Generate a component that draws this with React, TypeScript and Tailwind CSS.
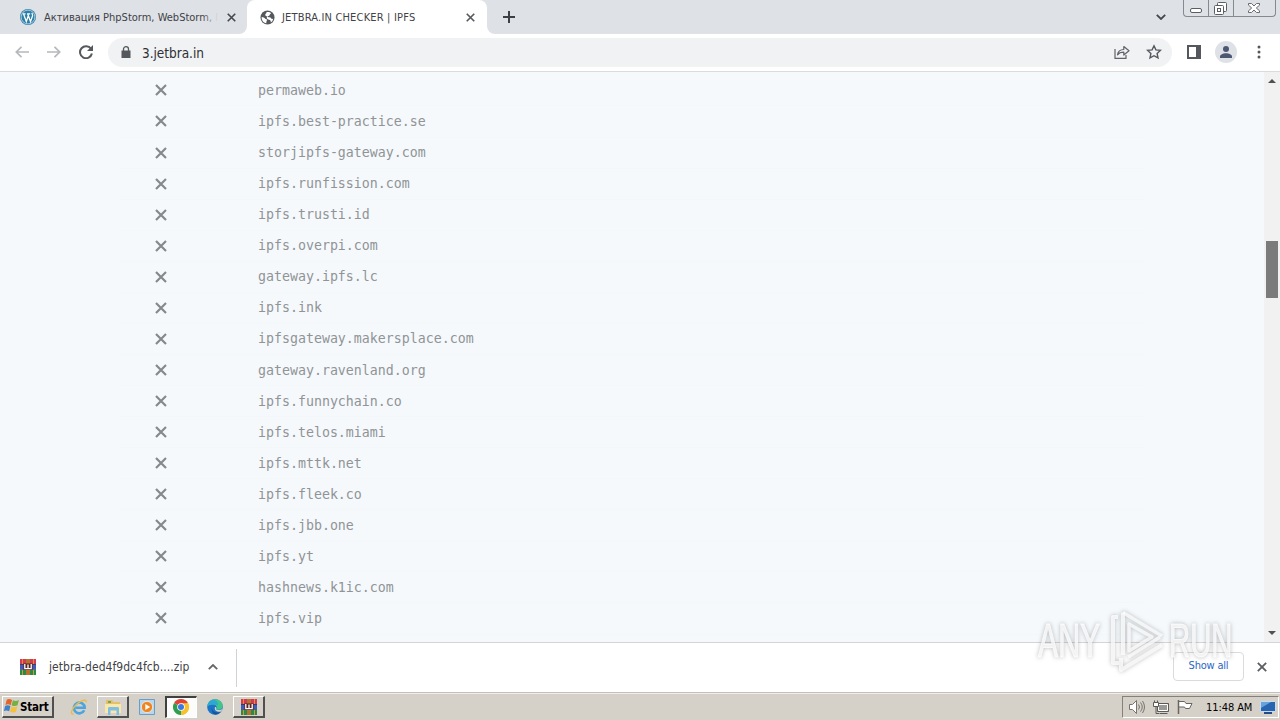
import type { ReactNode } from "react";

const gateways = [
  "permaweb.io",
  "ipfs.best-practice.se",
  "storjipfs-gateway.com",
  "ipfs.runfission.com",
  "ipfs.trusti.id",
  "ipfs.overpi.com",
  "gateway.ipfs.lc",
  "ipfs.ink",
  "ipfsgateway.makersplace.com",
  "gateway.ravenland.org",
  "ipfs.funnychain.co",
  "ipfs.telos.miami",
  "ipfs.mttk.net",
  "ipfs.fleek.co",
  "ipfs.jbb.one",
  "ipfs.yt",
  "hashnews.k1ic.com",
  "ipfs.vip",
];

function Cross({ className }: { className: string }) {
  return (
    <svg viewBox="0 0 12 12" className={className} fill="none" stroke="currentColor" strokeWidth="2.2">
      <path d="M1 1l10 10M11 1L1 11" />
    </svg>
  );
}

function WordPressIcon() {
  return (
    <svg viewBox="0 0 16 16" className="h-4 w-4 shrink-0">
      <circle cx="8" cy="8" r="8" fill="#2b7fa8" />
      <circle cx="8" cy="8" r="6.9" fill="none" stroke="#dcebf3" strokeWidth="0.7" />
      <path d="M2.6 4.8h3M7 4.8h3.2M3.6 5l2.7 7.6L8.2 7M7.8 5l2.7 7.6 2-5.6c.4-1.4-.6-2-.4-3" fill="none" stroke="#fff" strokeWidth="1.3" />
    </svg>
  );
}

function GlobeIcon() {
  return (
    <svg viewBox="0 0 16 16" className="h-[15px] w-[15px] shrink-0">
      <circle cx="8" cy="8" r="7.5" fill="#54585c" />
      <path d="M1.8 7.4c1.8.4 3 .6 3.6 1.6.4.8 1.8.5 2 1.3.2 1-.8 1.4-.7 3.8C3.6 13.5 1.5 10.8 1.8 7.4z" fill="#fff" />
      <path d="M7 2.2c1.6-.5 3.7 0 4.9 1.1-.4 1.1-1.5 1.1-1.7 2.2-.3 1-2.2.3-2.2 1.5.1 1 2 .5 3.1.9.9.4.8 1.6 1.9 1.7l1-.3c-.3 1.9-1.2 3-2.4 3.9-.3-1.2-.1-2-1-2.5-1.1-.5-2.9-.5-3.3-1.9-.2-1 .5-1.3-.1-2.2-.4-.8-1.7-.3-1.7-1.4C5.5 4.1 7.2 3.8 7 2.2z" fill="#fff" />
    </svg>
  );
}

function WinRarIcon({ className }: { className: string }) {
  return (
    <svg viewBox="0 0 16 16" className={className}>
      <path fill="#d03a52" d="M0 0h16v5H0z" />
      <path fill="#3c5cc0" d="M0 5.5h16v5H0z" />
      <path fill="#2c8a45" d="M0 11h16v5H0z" />
      <path fill="#2a1d26" d="M0 5h16v.7H0zM0 10.4h16v.7H0z" />
      <path fill="#b6722e" d="M6 0h4v16H6z" />
      <path fill="#592520" d="M3.5 4.5h9V11h-9z" />
      <path fill="none" stroke="#fff" strokeWidth="1.3" d="M4.8 5v4.6h6.4V5M8 5.5v4" />
      <path fill="#e9a33c" d="M2 0h.8v5H2zM13.2 0h.8v5h-.8zM2 11h.8v5H2zM13.2 11h.8v5h-.8z" />
    </svg>
  );
}

function StartFlag() {
  return (
    <svg viewBox="0 0 16 16" className="-mt-[2px] h-[18px] w-[17px] shrink-0">
      <path fill="#e4642b" d="M3.5 2c2-1 3.500-.6 5 .3L7.300 7.200C5.500 6.200 4 6.200 2.300 7z" />
      <path fill="#76b043" d="M9.300 2.600c2 .9 3.800.8 5.700-.2l-1.300 5c-1.900.9-3.700.9-5.600-.2z" />
      <path fill="#3c83c9" d="M2 7.900c1.800-.9 3.300-.8 5 .2L5.800 13c-1.700-1-3.300-1-5-.3z" />
      <path fill="#f5c13c" d="M7.900 8.400c1.900 1 3.700 1 5.600.1l-1.300 4.900c-1.900.9-3.700.9-5.600-.1z" />
    </svg>
  );
}

function IeIcon() {
  return (
    <svg viewBox="0 0 18 18" className="h-[18px] w-[18px]" fill="none">
      <path d="M14.200 12.200A5.400 5.400 0 1 1 14.700 9.800H5.500" stroke="#4aa5e0" strokeWidth="2.600" />
      <path d="M3.500 15.800C-.5 17 1.500 10.500 7.500 5.500c4-3.400 9.500-5 8.500-1.300" stroke="#e9bd4c" strokeWidth="1.500" />
    </svg>
  );
}

function FolderIcon() {
  return (
    <svg viewBox="0 0 18 16" className="h-4 w-[18px]">
      <path fill="#e3c069" d="M2 1h6l1.500 2H16v11H2z" />
      <path fill="#f9e9a8" d="M1 5h16v9H1z" />
      <path fill="#81bde4" d="M4 9.500c0-1 .5-1.500 1.500-1.500h8c1 0 1.500.5 1.500 1.500V16h-2.500v-4.500h-6V16H4z" />
      <path fill="#70a65b" d="M4 2h3v2H4z" />
    </svg>
  );
}

function MediaIcon() {
  return (
    <svg viewBox="0 0 16 16" className="h-4 w-4">
      <path fill="#b7d7ef" stroke="#6a9ec5" d="M.5.5h15v15H.5z" />
      <circle cx="8" cy="8" r="5.600" fill="#ef8422" stroke="#fff" strokeWidth=".6" />
      <path fill="#fff" d="M6.300 4.900v6.200L11.200 8z" />
    </svg>
  );
}

function ChromeIcon() {
  return (
    <svg viewBox="0 0 16 16" className="-mt-px -ml-px h-4 w-4">
      <path fill="#e14337" d="M8 8L1.070 4A8 8 0 0 1 14.930 4z" />
      <path fill="#f6c22d" d="M8 8L14.930 4A8 8 0 0 1 8 16z" />
      <path fill="#2f9e50" d="M8 8v8A8 8 0 0 1 1.070 4z" />
      <path fill="#f6c22d" d="M8 4.300h7.100A8 8 0 0 1 8 16l3.200-6.100z" />
      <circle cx="8" cy="8" r="3.800" fill="#fff" />
      <circle cx="8" cy="8" r="3" fill="#3b79e0" />
    </svg>
  );
}

function EdgeIcon() {
  return (
    <svg viewBox="0 0 16 16" className="h-4 w-4">
      <circle cx="8" cy="8" r="7.800" fill="#1b74c5" />
      <path fill="#42c58c" d="M.4 7.200C1 2.800 4.100.2 8 .2c4.600 0 7.800 3.200 7.800 6.500 0 2.800-2 4-4.200 4-1.700 0-2.600-.5-2.300-1 1.200-2.300-.5-4.100-3.400-4.100-2.500 0-4.400.7-5.500 1.600z" />
      <path fill="#2ea7d4" d="M.4 7.200C1 2.800 4 .8 7 1c3 .3 4.300 3 3.900 5.500C9.500 5.300 3.500 4.500.4 7.200z" />
      <path fill="#d5d0c8" d="M9.300 9.700c-.3.600.7 1.400 2.400 1.400 1.500 0 2.900-.5 3.900-1.300-.3 1-.9 2-1.600 2.800-3.500.8-7.200-.8-6-4.600.4-.2 1.700.5 1.300 1.700z" />
      <path fill="#15539e" d="M4.800 8.500c.3 4.500 4.200 6 8.600 4.500-2.700 3.700-9.300 3.700-8.600-4.500z" />
    </svg>
  );
}

// Classic raised / pressed taskbar button
function TaskButton({ pressed, children }: { pressed?: boolean; children: ReactNode }) {
  return (
    <div
      className={
        pressed
          ? "flex h-[22px] w-8 items-center justify-center border-t-2 border-l-2 border-r border-b border-t-[#404040] border-l-[#404040] border-r-white border-b-white bg-[#fcfcfa]"
          : "flex h-[22px] w-8 items-center justify-center border-t border-l border-r-2 border-b-2 border-t-white border-l-white border-r-[#505050] border-b-[#505050] bg-[#d6d1ca]"
      }
    >
      {children}
    </div>
  );
}

function TabStrip() {
  return (
    <div className="flex h-[34px] shrink-0 bg-[#dee1e6]">
      <div className="flex w-[247px] items-center pr-[10px] pl-5">
        <WordPressIcon />
        <div className="relative mt-[2px] ml-2 w-[174px] overflow-hidden text-[11px] tracking-[0px] whitespace-nowrap text-[#3f4247]">
          Активация PhpStorm, WebStorm, I
          <div className="absolute top-0 right-0 h-full w-4 bg-linear-to-r from-transparent to-[#dee1e6]" />
        </div>
        <Cross className="ml-[9px] h-[9px] w-[9px] text-[#45494d]" />
      </div>
      <div className="relative flex w-60 items-center rounded-t-lg bg-white pr-3 pl-[13px]">
        <div className="absolute bottom-0 -left-2 h-2 w-2 bg-white">
          <div className="h-2 w-2 rounded-br-lg bg-[#dee1e6]" />
        </div>
        <div className="absolute -right-2 bottom-0 h-2 w-2 bg-white">
          <div className="h-2 w-2 rounded-bl-lg bg-[#dee1e6]" />
        </div>
        <GlobeIcon />
        <span className="mt-[2px] ml-[7px] flex-1 text-[11px] tracking-[0.18px] whitespace-nowrap text-[#3f4247]">JETBRA.IN CHECKER | IPFS</span>
        <Cross className="h-[9px] w-[9px] text-[#55595d]" />
      </div>
      <svg viewBox="0 0 12 12" className="mt-[11px] ml-4 h-3 w-3" stroke="#3c4043" strokeWidth="2">
        <path d="M6 0v12M0 6h12" />
      </svg>
      <svg viewBox="0 0 10 6" className="mt-[14px] ml-auto h-[6px] w-[10px]" fill="none" stroke="#44484c" strokeWidth="1.800">
        <path d="M.8.8L5 5 9.200.8" />
      </svg>
      <div className="mr-1 ml-[17px] flex h-[17px] w-[93px] rounded-b-[4px] border border-t-0 border-[#858990] text-[#5a5e64]">
        <div className="w-[25px] border-r border-[#858990] pt-2 pl-[6px]">
          <div className="h-[5px] w-3 rounded-[2px] border border-current bg-white" />
        </div>
        <div className="w-[25px] border-r border-[#858990] pt-[2px] pl-[5px]">
          <svg viewBox="0 0 13 13" className="h-[13px] w-[13px]" fill="none" stroke="currentColor">
            <rect x="3.500" y=".5" width="9" height="9" rx="1" fill="#fff" />
            <rect x=".5" y="3.500" width="9" height="9" rx="1" fill="#fff" />
            <rect x="3.500" y="6.500" width="3" height="3" />
          </svg>
        </div>
        <div className="pt-[3px] pl-[14px]">
          <svg viewBox="0 0 12 10" className="h-[10px] w-3" fill="#fff" stroke="currentColor" strokeWidth=".9">
            <path d="M.5.500h3L6 3 8.500.5h3v1.700L8.300 5l3.200 2.800v1.700h-3L6 7 3.500 9.500h-3V7.800L3.700 5 .5 2.200z" />
          </svg>
        </div>
      </div>
    </div>
  );
}

function Toolbar() {
  return (
    <div className="flex h-[38px] shrink-0 items-center border-b border-[#d9dbde] bg-white">
      <div className="flex w-[108px] items-center pl-[15px]">
        <svg viewBox="0 0 14 12" className="-mt-px h-3 w-[14px]" fill="none" stroke="#b6b8bb" strokeWidth="1.700">
          <path d="M14 6H1.500M6.500.800L1.300 6l5.200 5.200" />
        </svg>
        <svg viewBox="0 0 14 12" className="-mt-px ml-[18px] h-3 w-[14px]" fill="none" stroke="#b6b8bb" strokeWidth="1.700">
          <path d="M0 6h12.500M7.500.800L12.700 6l-5.200 5.200" />
        </svg>
        <svg viewBox="0 0 14 14" className="-mt-px ml-[18px] h-[14px] w-[14px]" fill="none" stroke="#55585c" strokeWidth="2">
          <path d="M12 3.800A6 6 0 1 0 12.900 8.500" />
          <path fill="#55585c" stroke="none" d="M14 0v6H8z" />
        </svg>
      </div>
      <div className="flex h-[29px] w-[1064px] items-center rounded-full bg-[#f0f2f4] pr-[10px] pl-[13px]">
        <svg viewBox="0 0 10 12" className="-mt-[2px] h-3 w-[10px]">
          <path fill="#54575b" d="M.5 4.500h9V12h-9z" />
          <path fill="none" stroke="#54575b" strokeWidth="1.300" d="M2.500 5V3a2.500 2.300 0 0 1 5 0v2" />
        </svg>
        <span className="mt-px ml-[11px] text-[13.5px] tracking-[-0.03px] text-[#2e3033]">3.jetbra.in</span>
        <svg viewBox="0 0 16 14" className="-mt-px ml-auto h-[14px] w-4" fill="none" stroke="#606367" strokeWidth="1.200">
          <path d="M1 4v9.400h11V10" />
          <path d="M3.500 9.800C4 6.300 6.200 4.600 9.800 4.500V1.500L15 5.800 9.800 10V7.200C7 7.200 5 7.900 3.500 9.800z" strokeLinejoin="round" />
        </svg>
        <svg viewBox="0 0 16 16" className="-mt-[2px] ml-4 h-4 w-4" fill="none" stroke="#55585c" strokeWidth="1.400">
          <path d="M8 1.800l1.900 4.100 4.500.5-3.300 3.100.9 4.400L8 11.700 4 13.900l.9-4.400L1.600 6.400l4.500-.5z" />
        </svg>
      </div>
      <svg viewBox="0 0 14 14" className="-mt-px ml-[15px] h-[14px] w-[14px]">
        <path fill="#54575b" fillRule="evenodd" d="M0 0h14v14H0zM2 2v10h7V2z" />
      </svg>
      <svg viewBox="0 0 22 22" className="-mt-px ml-[14px] h-[22px] w-[22px]">
        <circle cx="11" cy="11" r="11" fill="#dee1e6" />
        <circle cx="11" cy="8" r="3" fill="#4c5873" />
        <path fill="#4c5873" d="M5 17v-1.500c0-2 3-3.300 6-3.300s6 1.300 6 3.300V17z" />
      </svg>
      <svg viewBox="0 0 4 14" className="-mt-px ml-5 h-[14px] w-1" fill="#54575b">
        <circle cx="2" cy="2" r="1.500" />
        <circle cx="2" cy="7" r="1.500" />
        <circle cx="2" cy="12" r="1.500" />
      </svg>
    </div>
  );
}

function GatewayPage() {
  return (
    <div className="flex h-[570px] shrink-0 overflow-hidden bg-[#f5f9fc]">
      <div className="flex-1 pt-[3.4px] pl-[120px]">
        {gateways.map((host) => (
          <div key={host} className="flex h-[31.07px] w-[1024px] items-center border-b border-[#f3f7fa]">
            <div className="w-[138px] pl-[35px]">
              <Cross className="h-3 w-3 text-[#85898c]" />
            </div>
            <span className="mt-px font-['DejaVu_Sans_Mono',monospace] text-[13.28px] text-[#909497]">{host}</span>
          </div>
        ))}
      </div>
      <div className="flex w-4 flex-col items-center bg-[#f1f1f1]">
        <svg viewBox="0 0 8 4" className="mt-[7px] h-1 w-2" fill="#505050">
          <path d="M0 4l4-4 4 4z" />
        </svg>
        <div className="mt-[158px] h-[57px] w-3 bg-[#7b7b7b]" />
        <svg viewBox="0 0 8 4" className="mt-auto mb-[7px] h-1 w-2" fill="#505050">
          <path d="M0 0l4 4 4-4z" />
        </svg>
      </div>
    </div>
  );
}

function DownloadBar() {
  return (
    <div className="flex h-[50px] shrink-0 items-center border-t border-[#d3d5d8] bg-white">
      <div className="flex h-[38px] w-[237px] items-center border-r border-[#d0d2d5] pb-[2px] pl-5">
        <WinRarIcon className="h-4 w-4" />
        <span className="ml-[13px] w-[147px] text-[12px] tracking-[0.05px] whitespace-nowrap text-[#3f4247]">jetbra-ded4f9dc4fcb....zip</span>
        <svg viewBox="0 0 10 6" className="ml-3 h-[6px] w-[10px]" fill="none" stroke="#64676a" strokeWidth="1.800">
          <path d="M.8 5.200L5 1l4.200 4.200" />
        </svg>
      </div>
      <div className="-mt-[3px] ml-auto flex h-[29px] w-[71px] items-center justify-center rounded-[4px] border border-[#d9dbdf] text-[11px] tracking-[-0.2px] text-[#2a67c5]">
        Show all
      </div>
      <Cross className="-mt-[2px] mr-[13px] ml-[13px] h-[10px] w-[10px] text-[#5c5f62]" />
    </div>
  );
}

function Taskbar() {
  return (
    <div className="flex h-7 shrink-0 items-center border-t border-[#c5c0b8] bg-[#d5d0c8] pt-px shadow-[inset_0_1px_0_#efede9]">
      <div className="ml-[2px] flex h-[22px] w-[52px] items-center border-t border-l border-r-2 border-b-2 border-t-white border-l-white border-r-[#505050] border-b-[#505050]">
        <StartFlag />
        <span className="mt-[2px] text-[11.5px] font-bold tracking-[-0.2px] text-black">Start</span>
      </div>
      <div className="ml-[16px]">
        <IeIcon />
      </div>
      <div className="ml-[9px]">
        <TaskButton>
          <FolderIcon />
        </TaskButton>
      </div>
      <div className="ml-[10px]">
        <MediaIcon />
      </div>
      <div className="ml-[10px]">
        <TaskButton pressed>
          <ChromeIcon />
        </TaskButton>
      </div>
      <div className="ml-[10px]">
        <EdgeIcon />
      </div>
      <div className="ml-[10px]">
        <TaskButton>
          <WinRarIcon className="h-4 w-4" />
        </TaskButton>
      </div>
      <div className="mr-px ml-auto flex h-[22px] w-[157px] items-center border border-t-[#85817a] border-r-white border-b-white border-l-[#85817a] pl-[6px]">
        <svg viewBox="0 0 16 14" className="h-[14px] w-4" fill="none" stroke="#77746f">
          <path fill="#fff" d="M.5 4.500h3l4-4v13l-4-4h-3z" />
          <path d="M9.500 4.500q2 2.500 0 5M11.500 2.500q3.500 4.500 0 9M13.500 1q4 6 0 12" />
        </svg>
        <svg viewBox="0 0 16 15" className="ml-2 h-[15px] w-4" stroke="#5c5a56">
          <path fill="#9a9995" d="M4.500 3.500h11v8h-11z" />
          <path fill="none" stroke="#fff" d="M5.500 4.500h9v6h-9z" />
          <path fill="#fff" d="M.5 2.500h5v4h-5zM1.500.5v2M4.500.5v2" />
          <path fill="none" d="M3 6.500v7h3M6.500 13.500h8" />
        </svg>
        <svg viewBox="0 0 16 14" className="ml-2 h-[14px] w-4" stroke="#686560">
          <path fill="#fff" d="M1.500 1.500h6l1.500 2h6l-2.500 5H8.500l-1-1.500h-6z" />
          <path d="M1.500 0v14" strokeWidth="1.500" />
        </svg>
        <span className="mt-[2px] ml-[13px] w-[48px] text-[11px] tracking-[-0.08px] whitespace-nowrap text-black">11:48 AM</span>
        <svg viewBox="0 0 16 13" className="ml-[6px] h-[13px] w-4">
          <path fill="#2864b0" stroke="#c8dcee" d="M.5.5h15v10H.5z" />
          <path fill="#66a2dc" d="M1 1h10L1 7z" />
          <path fill="#234b85" d="M4 11h8v2H4z" />
        </svg>
      </div>
    </div>
  );
}

function Watermark() {
  return (
    <div className="pointer-events-none absolute top-[608px] left-[1038px] flex h-[66px] w-[196px] items-center font-['Liberation_Sans',sans-serif] text-[48px] leading-none text-white/75 drop-shadow-[0_0_2px_rgba(90,90,90,0.5)]">
      <span className="w-[66px] origin-left scale-x-[0.63] [-webkit-text-stroke:1px_rgba(255,255,255,0.75)]">ANY</span>
      <svg viewBox="0 0 60 66" className="h-[66px] w-[60px] shrink-0" fill="none" stroke="currentColor" strokeWidth="4" strokeLinejoin="round">
        <path d="M14 9H9v46h6M19 4.500v42.500" />
        <path d="M19 4.500L58 28M56 29L24 49M25 16v27l23-14z" strokeWidth="3.500" />
        <path d="M17 50v12l41-25" />
      </svg>
      <span className="ml-[5px] w-[66px] origin-left scale-x-[0.61] [-webkit-text-stroke:1px_rgba(255,255,255,0.75)]">RUN</span>
    </div>
  );
}

export default function App() {
  return (
    <div className="relative flex h-[720px] w-[1280px] flex-col overflow-hidden font-['DejaVu_Sans_Condensed','DejaVu_Sans',sans-serif]">
      <TabStrip />
      <Toolbar />
      <GatewayPage />
      <DownloadBar />
      <Taskbar />
      <Watermark />
    </div>
  );
}
